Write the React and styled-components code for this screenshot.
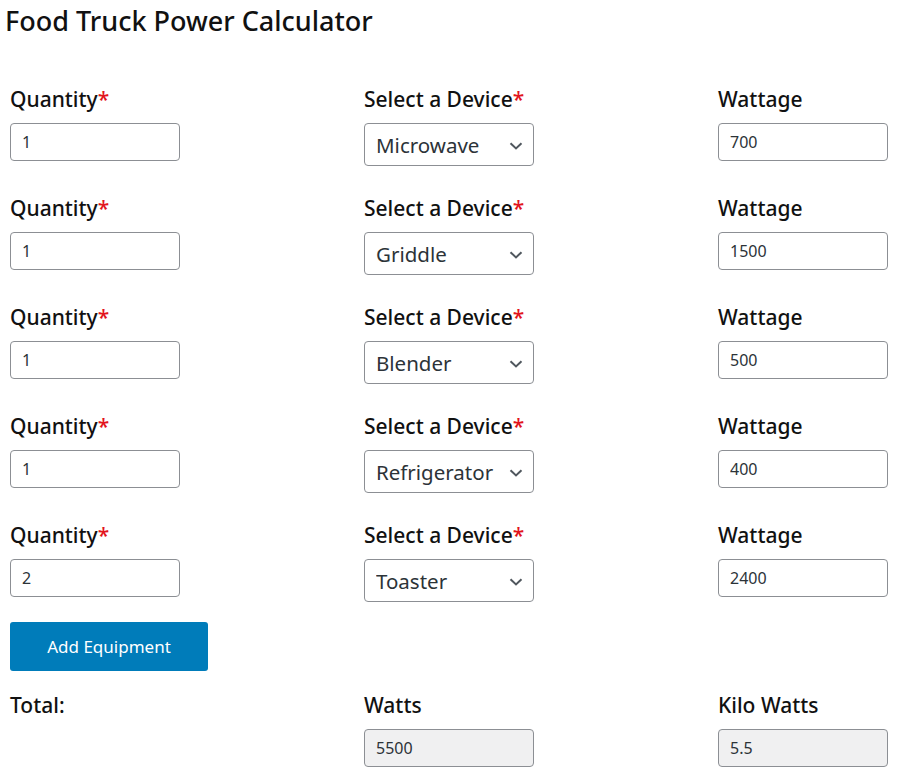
import { useState } from "react";
import styled, { createGlobalStyle } from "styled-components";

const GlobalStyle = createGlobalStyle`
  body {
    margin: 0;
    background: #fff;
    font-family: "Noto Sans", "Open Sans", sans-serif;
    color: #1d2327;
  }
`;

const Page = styled.div`
  padding: 0 0 12px 5px;
`;

const Title = styled.h1`
  margin: 3px 0 0;
  font-size: 27px;
  line-height: 35px;
  font-weight: 500;
  color: #111;
`;

const Form = styled.form`
  display: flex;
  flex-direction: column;
  gap: 28px;
  padding: 47px 0 0 5px;
`;

const Row = styled.div`
  display: grid;
  grid-template-columns: 354px 354px 1fr;
  align-items: start;
`;

const Field = styled.div`
  display: flex;
  flex-direction: column;
  align-items: flex-start;
`;

const Label = styled.label`
  font-size: 21px;
  line-height: 28px;
  font-weight: 500;
  color: #111;
  margin-bottom: 10px;
`;

const Required = styled.span`
  color: #e2141c;
`;

const TextInput = styled.input`
  box-sizing: border-box;
  width: 170px;
  height: 38px;
  padding: 0 11px;
  border: 1px solid #8c8f94;
  border-radius: 4px;
  font-family: inherit;
  font-size: 16px;
  color: #2c3338;
  background: ${({ readOnly }) => (readOnly ? "#f0f0f1" : "#fff")};
  outline: none;
`;

const SelectWrap = styled.div`
  position: relative;
  width: 170px;
`;

const Select = styled.select`
  box-sizing: border-box;
  width: 100%;
  height: 43px;
  padding: 0 28px 0 11px;
  border: 1px solid #8c8f94;
  border-radius: 4px;
  background: #fff;
  font-family: inherit;
  font-size: 20.5px;
  color: #2c3338;
  appearance: none;
  outline: none;
`;

const Chevron = styled.svg`
  position: absolute;
  right: 11px;
  top: 19px;
  pointer-events: none;
`;

const Button = styled.button`
  align-self: flex-start;
  width: 198px;
  height: 49px;
  margin-top: -8px;
  border: none;
  border-radius: 3px;
  background: #007cba;
  color: #fff;
  font-family: inherit;
  font-size: 17px;
  cursor: pointer;

  &:hover {
    background: #006ba1;
  }
`;

const TotalRow = styled(Row)`
  margin-top: -8px;
`;

const DEVICES = {
  Microwave: 700,
  Griddle: 1500,
  Blender: 500,
  Refrigerator: 400,
  Toaster: 1200,
};

const initial = [
  { qty: 1, device: "Microwave" },
  { qty: 1, device: "Griddle" },
  { qty: 1, device: "Blender" },
  { qty: 1, device: "Refrigerator" },
  { qty: 2, device: "Toaster" },
];

export default function App() {
  const [items, setItems] = useState(initial);

  const update = (i, key, value) => {
    setItems(items.map((it, idx) => (idx === i ? { ...it, [key]: value } : it)));
  };

  const watts = (it) => (Number(it.qty) || 0) * DEVICES[it.device];
  const total = items.reduce((sum, it) => sum + watts(it), 0);

  return (
    <Page>
      <GlobalStyle />
      <Title>Food Truck Power Calculator</Title>
      <Form onSubmit={(e) => e.preventDefault()}>
        {items.map((it, i) => (
          <Row key={i}>
            <Field>
              <Label>
                Quantity<Required>*</Required>
              </Label>
              <TextInput
                type="text"
                value={it.qty}
                onChange={(e) => update(i, "qty", e.target.value)}
              />
            </Field>
            <Field>
              <Label>
                Select a Device<Required>*</Required>
              </Label>
              <SelectWrap>
                <Select value={it.device} onChange={(e) => update(i, "device", e.target.value)}>
                  {Object.keys(DEVICES).map((d) => (
                    <option key={d}>{d}</option>
                  ))}
                </Select>
                <Chevron width="14" height="8" viewBox="0 0 14 8" fill="none">
                  <path d="M1.5 1.2L7 6.4l5.5-5.2" stroke="#50575e" strokeWidth="2" />
                </Chevron>
              </SelectWrap>
            </Field>
            <Field>
              <Label>Wattage</Label>
              <TextInput type="text" value={watts(it)} onChange={() => {}} />
            </Field>
          </Row>
        ))}
        <Button type="button" onClick={() => setItems([...items, { qty: 1, device: "Microwave" }])}>
          Add Equipment
        </Button>
        <TotalRow>
          <Field>
            <Label>Total:</Label>
          </Field>
          <Field>
            <Label>Watts</Label>
            <TextInput type="text" value={total} readOnly />
          </Field>
          <Field>
            <Label>Kilo Watts</Label>
            <TextInput type="text" value={total / 1000} readOnly />
          </Field>
        </TotalRow>
      </Form>
    </Page>
  );
}
